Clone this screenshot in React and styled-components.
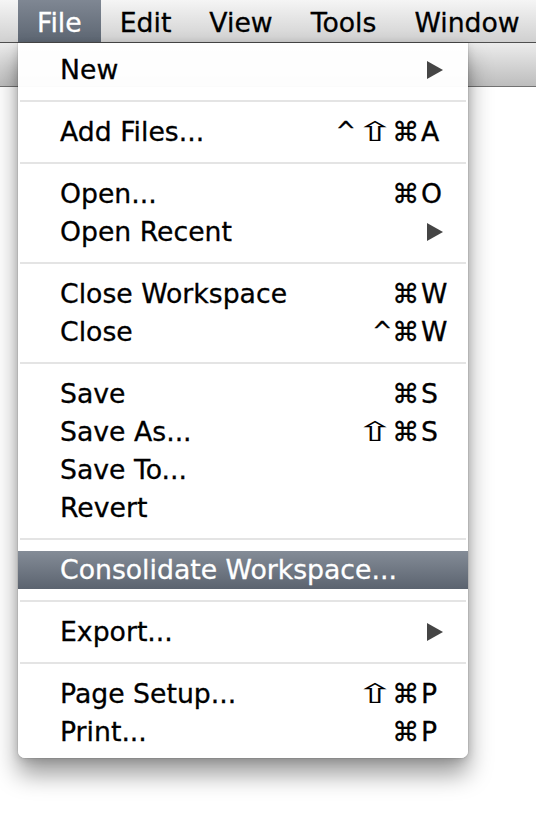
import React from 'react';
import styled, { createGlobalStyle } from 'styled-components';

const GlobalStyle = createGlobalStyle`
    body {
        margin: 0;
        background: #ffffff;
        font-family: 'DejaVu Sans', 'Liberation Sans', sans-serif;
    }
`

const menuTitles = ['File', 'Edit', 'View', 'Tools', 'Window'];

// each group is separated by a thin line
const groups = [
    [{ label: 'New', submenu: true }],
    [{ label: 'Add Files...', mods: ['^', '⇧', '⌘'], key: 'A' }],
    [
        { label: 'Open...', mods: ['⌘'], key: 'O' },
        { label: 'Open Recent', submenu: true },
    ],
    [
        { label: 'Close Workspace', mods: ['⌘'], key: 'W' },
        { label: 'Close', mods: ['^', '⌘'], key: 'W' },
    ],
    [
        { label: 'Save', mods: ['⌘'], key: 'S' },
        { label: 'Save As...', mods: ['⇧', '⌘'], key: 'S' },
        { label: 'Save To...' },
        { label: 'Revert' },
    ],
    [{ label: 'Consolidate Workspace...', active: true }],
    [{ label: 'Export...', submenu: true }],
    [
        { label: 'Page Setup...', mods: ['⇧', '⌘'], key: 'P' },
        { label: 'Print...', mods: ['⌘'], key: 'P' },
    ],
];

export default function App() {
    return (
        <Screen>
            <GlobalStyle />
            <MenuBar>
                {menuTitles.map((title, i) => (
                    <MenuTitle key={title} open={i === 0}>{title}</MenuTitle>
                ))}
            </MenuBar>
            <Toolbar />
            <Dropdown>
                {groups.map((group, gi) => (
                    <React.Fragment key={gi}>
                        {gi > 0 && <Separator />}
                        {group.map(item => (
                            <Item key={item.label} active={item.active}>
                                <Label>{item.label}</Label>
                                {item.mods && (
                                    <Mods>
                                        {item.mods.map(m => (
                                            <Mod key={m} kind={m}>{m}</Mod>
                                        ))}
                                    </Mods>
                                )}
                                <KeyCell>
                                    {item.key}
                                    {item.submenu && <Arrow />}
                                </KeyCell>
                            </Item>
                        ))}
                    </React.Fragment>
                ))}
            </Dropdown>
        </Screen>
    )
}

const Screen = styled.div`
    position: relative;
    width: 536px;
    height: 816px;
    overflow: hidden;
    background: #ffffff;
`
const MenuBar = styled.div`
    display: flex;
    height: 42px;
    padding-left: 18px;
    background: linear-gradient(#f5f5f5, #d0d0d0);
    border-bottom: 1px solid #4f4f4f;
`
const MenuTitle = styled.div`
    padding: 3px 19px 0;
    line-height: 39px;
    font-size: 26.7px;
    -webkit-text-stroke: 0.3px ${p => p.open ? '#ffffff' : '#000000'};
    color: ${p => p.open ? '#ffffff' : '#000000'};
    background: ${p => p.open ? 'linear-gradient(#7f8793, #5d6672)' : 'transparent'};
`
const Toolbar = styled.div`
    height: 43px;
    background: linear-gradient(#ececec, #bdbdbd);
    border-bottom: 1px solid #727272;
`
const Dropdown = styled.div`
    position: absolute;
    top: 43px;
    left: 18px;
    width: 450px;
    padding: 8px 0 7px;
    box-sizing: border-box;
    background: rgba(255, 255, 255, 0.97);
    border-radius: 0 0 7px 7px;
    box-shadow: 0 0 0 1px rgba(0, 0, 0, 0.06), 0 16px 24px rgba(0, 0, 0, 0.4), 0 2px 8px rgba(0, 0, 0, 0.15);
`
const Item = styled.div`
    display: flex;
    align-items: center;
    height: 38px;
    padding: 0 22px 1px 42px;
    box-sizing: border-box;
    line-height: 36px;
    font-size: 26.7px;
    color: ${p => p.active ? '#ffffff' : '#000000'};
    -webkit-text-stroke: 0.3px ${p => p.active ? '#ffffff' : '#000000'};
    background: ${p => p.active ? 'linear-gradient(#848c97, #5b636f)' : 'transparent'};
`
const Label = styled.span`
    flex: 1;
    white-space: nowrap;
`
const Mods = styled.span`
    display: flex;
    align-items: center;
    margin-right: 1px;
`
const Mod = styled.span`
    display: inline-block;
    font-size: ${p => p.kind === '^' ? '24px' : '26.7px'};
    margin: ${p => p.kind === '⇧' ? '0 6px 0 8px' : '0'};
    transform: ${p => p.kind === '⇧' ? 'scaleX(1.75)' : 'none'};
    -webkit-text-stroke: ${p => p.kind === '⇧' ? '0' : 'inherit'};
    position: relative;
    top: ${p => p.kind === '^' ? '-1px' : '0'};
`
const KeyCell = styled.span`
    position: relative;
    width: 26px;
    padding-left: 1px;
    box-sizing: border-box;
`
const Arrow = styled.span`
    position: absolute;
    left: 7px;
    top: 50%;
    margin-top: -9px;
    width: 0;
    height: 0;
    border-top: 9.5px solid transparent;
    border-bottom: 9.5px solid transparent;
    border-left: 16px solid #454545;
`
const Separator = styled.div`
    height: 2px;
    margin: 11px 2px;
    background: #e4e4e4;
`
